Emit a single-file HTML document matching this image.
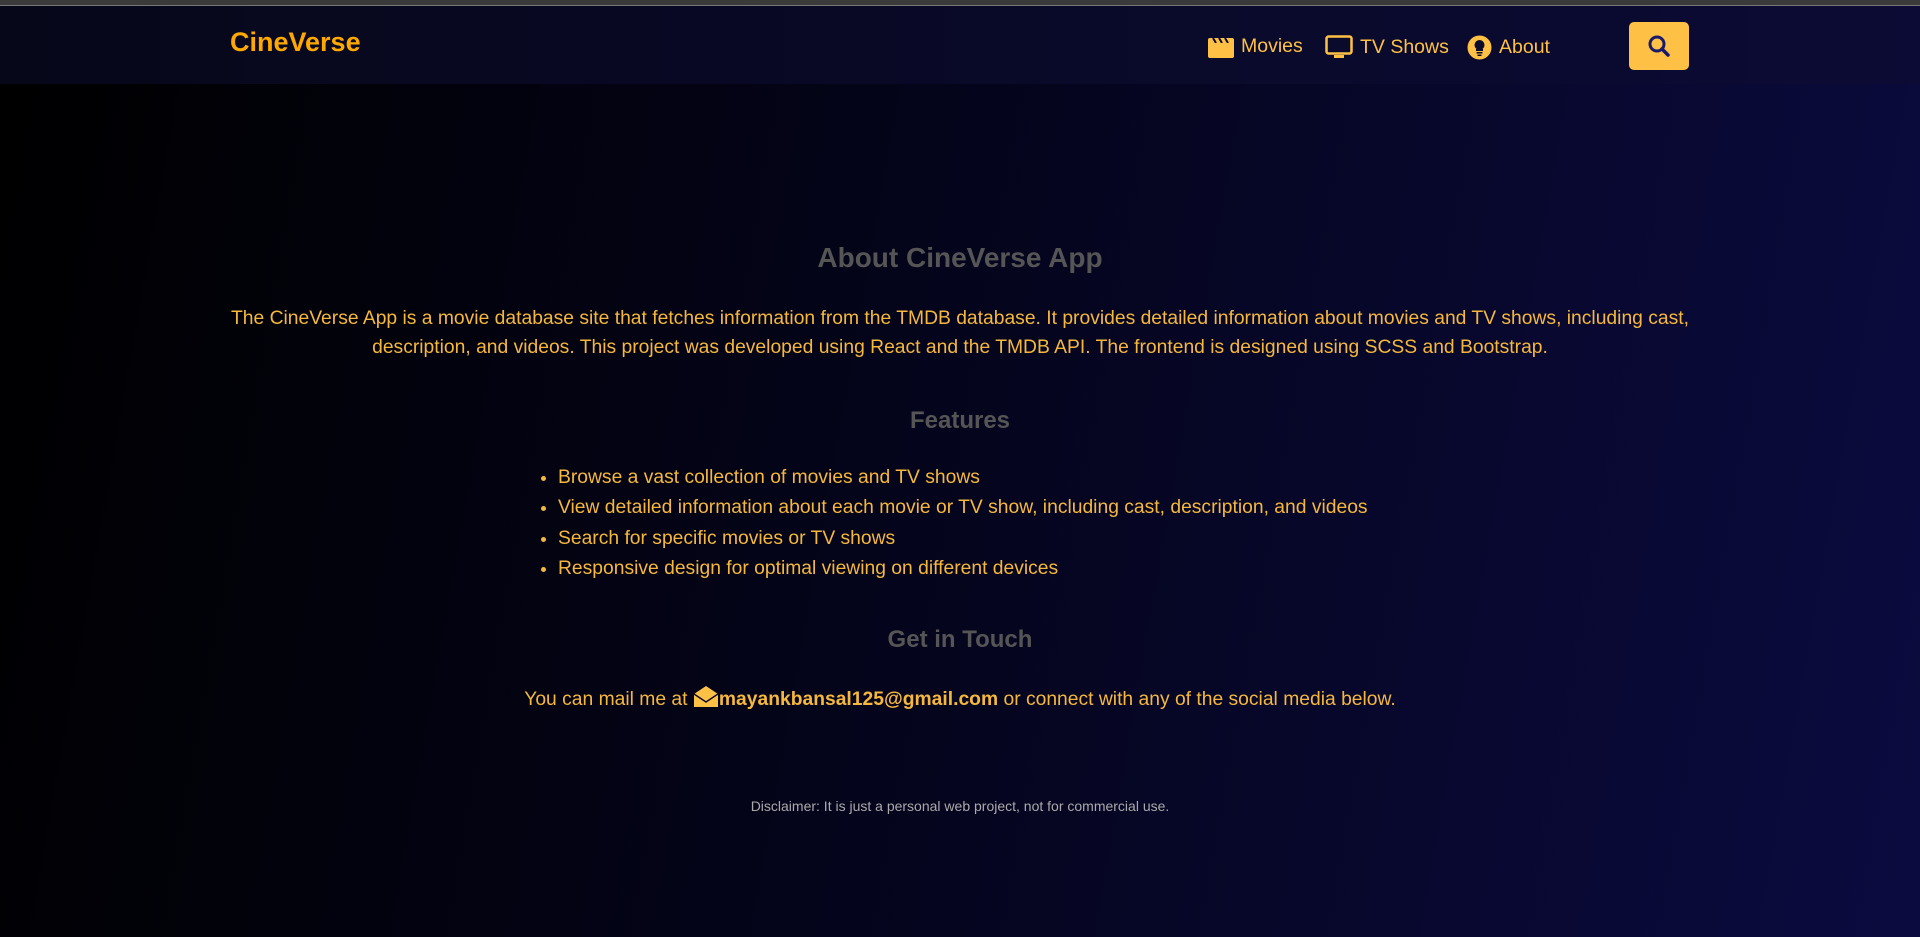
<!DOCTYPE html>
<html><head><meta charset="utf-8"><style>
*{margin:0;padding:0;box-sizing:border-box}
html,body{width:1920px;height:937px;overflow:hidden}
body{font-family:"Segoe UI","Liberation Sans",sans-serif;background:linear-gradient(100deg,#000 0%,#04041a 45%,#0b0b40 100%);position:relative;color:#f5b83d}
.top{position:absolute;left:0;top:0;width:1920px;height:6px;background:#3a3a3a;border-bottom:1px solid #777}
.nav{position:absolute;left:0;top:6px;width:1920px;height:78px;background:linear-gradient(90deg,#07071a,#0b0b35)}
.logo{position:absolute;left:230px;top:21px;font-size:27px;font-weight:bold;color:#ffa800}
.item{position:absolute;top:29px;font-size:19.5px;color:#ffc145;display:flex;align-items:center;gap:7px}
.btn{position:absolute;left:1629px;top:16px;width:60px;height:48px;background:#ffc145;border-radius:5px}
.c{position:absolute;left:0;width:1920px;text-align:center}
h2{font-size:28px;color:#555;font-weight:600}
h3{font-size:24px;color:#555;font-weight:600}
p{font-size:19.3px;line-height:29px}
ul{position:absolute;left:558px;top:463px;font-size:19.3px;line-height:30.3px;color:#f5b83d}
</style></head><body>
<div class="top"></div>
<div class="nav">
<div class="logo">CineVerse</div>
<div class="item" style="left:1208px"><svg width="26" height="22" viewBox="0 0 26 22"><rect x="0" y="2" width="26" height="20" rx="2" fill="#ffc145"/><path d="M5 2l3 5M11 2l3 5M17 2l3 5" stroke="#0a0a2a" stroke-width="2"/><rect x="0" y="7" width="26" height="1.5" fill="#ffc145"/></svg>Movies</div>
<div class="item" style="left:1325px"><svg width="28" height="24" viewBox="0 0 28 24"><rect x="1.5" y="1.5" width="25" height="17" rx="2" fill="none" stroke="#ffc145" stroke-width="2.5"/><rect x="9" y="20" width="10" height="3" fill="#ffc145"/></svg>TV Shows</div>
<div class="item" style="left:1467px"><svg width="25" height="25" viewBox="0 0 25 25"><circle cx="12.5" cy="12.5" r="12" fill="#ffc145"/><circle cx="12.5" cy="10" r="5" fill="#0a0a2a"/><rect x="9" y="14" width="7" height="2" fill="#0a0a2a"/><rect x="9.5" y="17" width="6" height="1.5" fill="#0a0a2a"/><rect x="10.5" y="19.5" width="4" height="1.5" fill="#0a0a2a"/></svg>About</div>
<div class="btn"><svg width="60" height="48" viewBox="0 0 60 48"><circle cx="28" cy="22" r="7" fill="none" stroke="#1a1a6a" stroke-width="3"/><path d="M33 27l6 6" stroke="#1a1a6a" stroke-width="3.5" stroke-linecap="round"/></svg></div>
</div>
<h2 class="c" style="top:242px">About CineVerse App</h2>
<p class="c" style="top:304px;left:200px;width:1520px">The CineVerse App is a movie database site that fetches information from the TMDB database. It provides detailed information about movies and TV shows, including cast, description, and videos. This project was developed using React and the TMDB API. The frontend is designed using SCSS and Bootstrap.</p>
<h3 class="c" style="top:407px">Features</h3>
<ul>
<li>Browse a vast collection of movies and TV shows</li>
<li>View detailed information about each movie or TV show, including cast, description, and videos</li>
<li>Search for specific movies or TV shows</li>
<li>Responsive design for optimal viewing on different devices</li>
</ul>
<h3 class="c" style="top:626px">Get in Touch</h3>
<p class="c" style="top:685px">You can mail me at <svg width="26" height="24" viewBox="0 0 26 24" style="vertical-align:-4px"><path d="M1 9L13 1l12 8v13H1z" fill="#ffc145"/><path d="M1 9l12 8 12-8" fill="none" stroke="#0a0a2a" stroke-width="1.5"/></svg><b>mayankbansal125@gmail.com</b> or connect with any of the social media below.</p>
<div class="c" style="top:798px;font-size:14px;color:#aaa">Disclaimer: It is just a personal web project, not for commercial use.</div>
</body></html>
